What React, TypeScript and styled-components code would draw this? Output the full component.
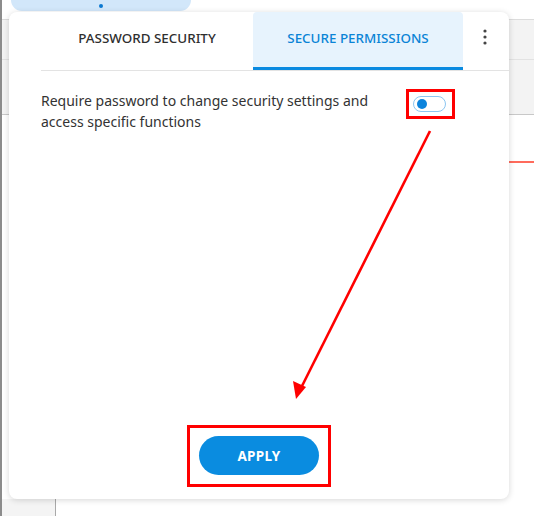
import styled, { createGlobalStyle } from "styled-components";

const GlobalStyle = createGlobalStyle`
  html, body {
    margin: 0;
    padding: 0;
    background: #ffffff;
    font-family: "Noto Sans", "Open Sans", sans-serif;
  }
  * { box-sizing: border-box; }
`;

export default function App() {
  return (
    <Screen>
      <GlobalStyle />
      <Backdrop>
        <TopStrip>
          <NavPill>
            <NavDot />
          </NavPill>
        </TopStrip>
        <GrayBand height={40} />
        <GrayBand height={55} strong />
        <AccentRow>
          <AccentLine />
        </AccentRow>
        <Filler />
        <BottomRow>
          <SideStub />
        </BottomRow>
      </Backdrop>

      <Card>
        <TabBar>
          <Tab>PASSWORD SECURITY</Tab>
          <Tab active>SECURE PERMISSIONS</Tab>
          <MenuButton aria-label="more">
            <svg width="4" height="16" viewBox="0 0 4 16">
              <circle cx="2" cy="2" r="1.6" fill="#444" />
              <circle cx="2" cy="8" r="1.6" fill="#444" />
              <circle cx="2" cy="14" r="1.6" fill="#444" />
            </svg>
          </MenuButton>
        </TabBar>

        <Body>
          <SettingRow>
            <SettingText>
              Require password to change security settings and access specific
              functions
            </SettingText>
            <Highlight pad="4px 6px 4px 4px">
              <Toggle>
                <Knob />
              </Toggle>
            </Highlight>
          </SettingRow>
        </Body>

        <Footer>
          <Highlight pad="8px 9px 9px 9px">
            <ApplyButton>APPLY</ApplyButton>
          </Highlight>
        </Footer>
      </Card>

      <Arrow width="534" height="516" viewBox="0 0 534 516">
        <line x1="430" y1="131" x2="301" y2="388" stroke="#f00" strokeWidth="2.6" />
        <polygon points="296,399 293,381 306,387" fill="#f00" />
      </Arrow>
    </Screen>
  );
}

const Screen = styled.div`
  position: relative;
  width: 534px;
  height: 516px;
  overflow: hidden;
`;

const Backdrop = styled.div`
  display: flex;
  flex-direction: column;
  height: 100%;
  border-left: 2px solid #8c8c8c;
`;

const TopStrip = styled.div`
  height: 20px;
  flex: none;
  border-bottom: 1px solid #dcdcdc;
  padding-left: 9px;
`;

const NavPill = styled.div`
  width: 180px;
  height: 11px;
  background: #d2e7fa;
  border-radius: 0 0 12px 12px;
  display: flex;
  justify-content: center;
  padding-top: 4px;
`;

const NavDot = styled.div`
  width: 4px;
  height: 4px;
  border-radius: 50%;
  background: #0b78d0;
`;

const GrayBand = styled.div<{ height: number; strong?: boolean }>`
  height: ${(p) => p.height}px;
  flex: none;
  background: #f3f3f3;
  border-bottom: 1px solid ${(p) => (p.strong ? "#c8c8c8" : "#e2e2e2")};
`;

const AccentRow = styled.div`
  height: 48px;
  flex: none;
  display: flex;
  align-items: flex-end;
  justify-content: flex-end;
`;

const AccentLine = styled.div`
  width: 60%;
  height: 2px;
  background: #ff6b5c;
`;

const Filler = styled.div`
  flex: 1;
`;

const BottomRow = styled.div`
  height: 17px;
  flex: none;
`;

const SideStub = styled.div`
  width: 54px;
  height: 100%;
  background: #f4f4f4;
  border-right: 1px solid #a9a9a9;
`;

const Card = styled.div`
  position: absolute;
  left: 9px;
  top: 12px;
  width: 500px;
  height: 487px;
  background: #ffffff;
  border-radius: 8px;
  box-shadow: 0 1px 6px rgba(0, 0, 0, 0.16);
  display: flex;
  flex-direction: column;
`;

const TabBar = styled.div`
  display: flex;
  height: 59px;
  margin-left: 32px;
  border-bottom: 1px solid #e3e3e3;
`;

const Tab = styled.div<{ active?: boolean }>`
  width: ${(p) => (p.active ? 210 : 212)}px;
  display: flex;
  align-items: center;
  justify-content: center;
  padding-bottom: ${(p) => (p.active ? 3 : 6)}px;
  font-size: 13.4px;
  font-weight: 500;
  color: ${(p) => (p.active ? "#0a84d6" : "#2f2f2f")};
  background: ${(p) => (p.active ? "#e7f3fd" : "transparent")};
  border-bottom: ${(p) => (p.active ? "3px solid #0a8ae0" : "none")};
  border-radius: ${(p) => (p.active ? "4px 4px 0 0" : "0")};
`;

const MenuButton = styled.div`
  flex: 1;
  display: flex;
  align-items: flex-start;
  justify-content: center;
  padding-top: 17px;
  padding-right: 2px;
`;

const Body = styled.div`
  flex: 1;
  padding: 18px 54px 0 32px;
`;

const SettingRow = styled.div`
  display: flex;
  align-items: flex-start;
  justify-content: space-between;
`;

const SettingText = styled.p`
  margin: 1px 0 0;
  width: 345px;
  font-size: 14px;
  line-height: 21px;
  color: #333333;
`;

const Highlight = styled.div<{ pad: string }>`
  border: 3px solid #f00;
  padding: ${(p) => p.pad};
  display: flex;
`;

const Toggle = styled.div`
  width: 33px;
  height: 16px;
  border: 1px solid #8cc6f1;
  border-radius: 8px;
  display: flex;
  align-items: center;
  padding-left: 3px;
`;

const Knob = styled.div`
  width: 10px;
  height: 10px;
  border-radius: 50%;
  background: #0d84dc;
`;

const Footer = styled.div`
  display: flex;
  justify-content: center;
  padding: 0 0 12px 0;
`;

const ApplyButton = styled.button`
  width: 120px;
  height: 39px;
  border: none;
  border-radius: 20px;
  background: #0a8ce0;
  color: #ffffff;
  font-family: "Noto Sans", "Open Sans", sans-serif;
  font-size: 13.5px;
  font-weight: 700;
  letter-spacing: 0.3px;
`;

const Arrow = styled.svg`
  position: absolute;
  left: 0;
  top: 0;
  pointer-events: none;
`;
